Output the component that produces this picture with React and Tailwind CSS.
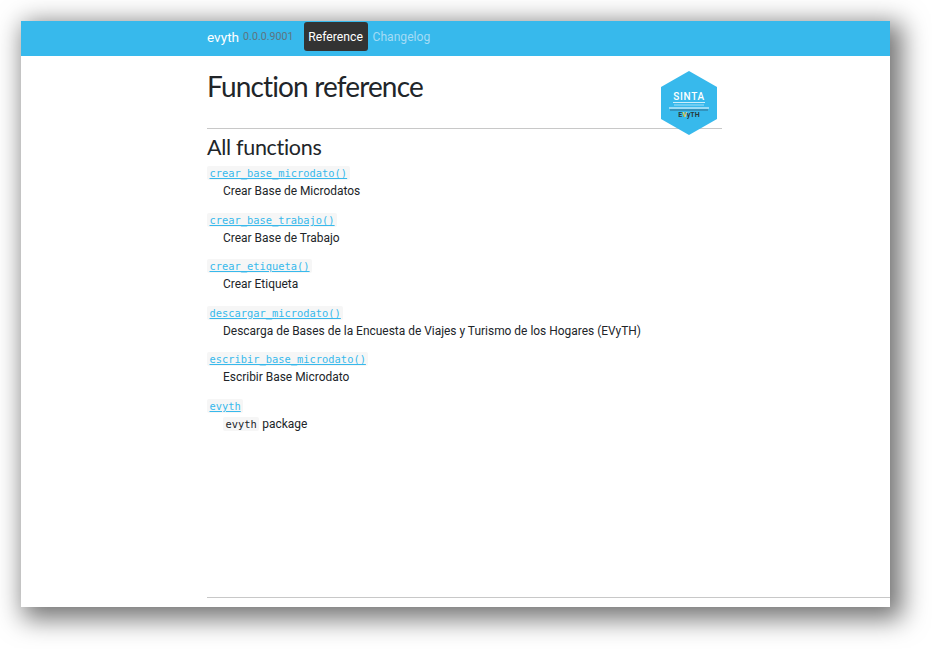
const items = [
  ["crear_base_microdato()", "Crear Base de Microdatos"],
  ["crear_base_trabajo()", "Crear Base de Trabajo"],
  ["crear_etiqueta()", "Crear Etiqueta"],
  ["descargar_microdato()", "Descarga de Bases de la Encuesta de Viajes y Turismo de los Hogares (EVyTH)"],
  ["escribir_base_microdato()", "Escribir Base Microdato"],
];
const mono = "font-['DejaVu_Sans_Mono',monospace] text-[10.4px] leading-[15px]";

function Logo() {
  return (
    <svg width="58" height="66" viewBox="0 0 58 66" className="absolute right-[4px] top-[-1px]">
      <polygon points="29,1 57,17 57,49 29,65 1,49 1,17" fill="#37b9ec" />
      <text x="29" y="30" textAnchor="middle" fill="#fff" fontSize="10" fontWeight="500" fontFamily="Roboto, sans-serif" letterSpacing="0.7">SINTA</text>
      <rect x="13" y="32" width="32" height="1" fill="#cdeefb" />
      <rect x="14" y="34.5" width="30" height="1" fill="#a5dff6" />
      <rect x="9" y="37.5" width="40" height="1" fill="#fff" />
      <rect x="10" y="39.5" width="38" height="1" fill="#2f6f8e" />
      <text x="29" y="47" textAnchor="middle" fill="#2a3a3c" fontSize="7" fontWeight="700" fontFamily="Roboto, sans-serif">E<tspan fill="#e8c23a">V</tspan>yTH</text>
    </svg>
  );
}

export default function App() {
  return (
    <div className="h-[649px] w-[932px] overflow-hidden bg-white pl-[21px] pt-[21px] font-['Roboto',sans-serif]">
      <div className="flex h-[586px] w-[869px] flex-col bg-white shadow-[7px_7px_24px_5px_rgba(0,0,0,0.55)]">
        <header className="flex h-[35px] shrink-0 items-center bg-[#37b9ec] pb-[4px] pl-[186px]">
          <span className="pt-[1px] text-[13.6px] text-white">evyth</span>
          <span className="ml-[4px] pt-[1px] text-[10.7px] text-[#5f7480]">0.0.0.9001</span>
          <span className="ml-[10px] flex h-[29px] w-[64px] items-center justify-center rounded-[3px] bg-[#333333] pt-[2px] text-[12.2px] text-white">Reference</span>
          <span className="ml-[5px] pt-[2px] text-[12.1px] text-[#a4dcf5]">Changelog</span>
        </header>
        <main className="flex flex-1 flex-col pl-[186px]">
          <div className="relative mt-[15px] h-[58px] w-[515px] border-b border-[#c8c8c8]">
            <h1 className="font-['Lato',sans-serif] text-[28px] leading-[30px] tracking-[-0.85px] text-[#212529]">Function reference</h1>
            <Logo />
          </div>
          <h2 className="mt-[4px] font-['Lato',sans-serif] text-[21.5px] leading-[28px] tracking-[-0.3px] text-[#212529]">All functions</h2>
          <dl className="mt-[5.4px] flex flex-col gap-[13.5px] text-[11.95px] leading-[15px] text-[#212529]">
            {items.map(([name, desc]) => (
              <div key={name} className="flex flex-col gap-[2px]">
                <dt><a className={`${mono} rounded-[2px] bg-[#f6f6f6] px-[2.5px] py-[1px] text-[#37b9ec] underline`}>{name}</a></dt>
                <dd className="pl-[16px] leading-[16px]">{desc}</dd>
              </div>
            ))}
            <div className="flex flex-col gap-[2px]">
              <dt><a className={`${mono} rounded-[2px] bg-[#f6f6f6] px-[2.5px] py-[1px] text-[#37b9ec] underline`}>evyth</a></dt>
              <dd className="pl-[16px] leading-[16px]"><code className={`${mono} rounded-[2px] bg-[#f6f6f6] px-[2.5px] py-[1px] text-[#212529]`}>evyth</code> package</dd>
            </div>
          </dl>
          <div className="mt-auto mb-[9px] border-t border-[#c8c8c8]" />
        </main>
      </div>
    </div>
  );
}
